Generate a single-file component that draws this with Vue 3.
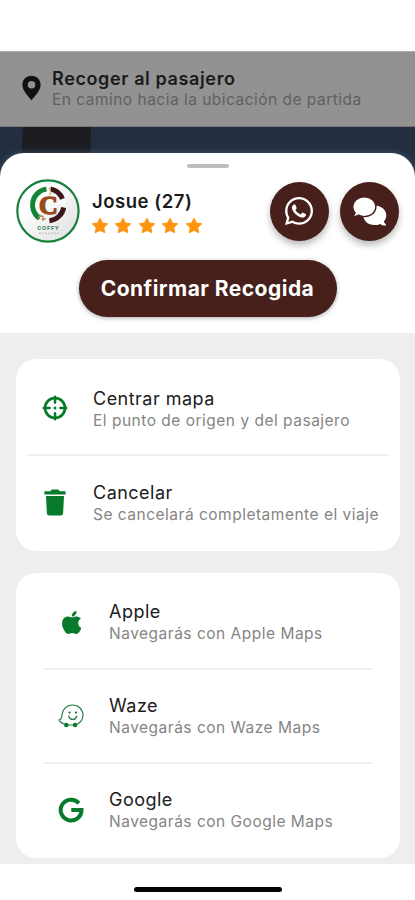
<script setup>
const stars = 5

const mapActions = [
  { icon: 'target', title: 'Centrar mapa', text: 'El punto de origen y del pasajero' },
  { icon: 'trash', title: 'Cancelar', text: 'Se cancelará completamente el viaje' },
]

const navigators = [
  { icon: 'apple', title: 'Apple', text: 'Navegarás con Apple Maps' },
  { icon: 'waze', title: 'Waze', text: 'Navegarás con Waze Maps' },
  { icon: 'google', title: 'Google', text: 'Navegarás con Google Maps' },
]
</script>

<template>
  <div class="screen">
    <header class="pickup">
      <svg class="pin" viewBox="0 0 20 27">
        <path fill-rule="evenodd" d="M10 0.5C4.6 0.5.4 4.7.4 10c0 6.5 6.5 12.300 9.600 16.500C13.100 22.300 19.600 16.500 19.600 10 19.600 4.700 15.400.5 10 .5zm0 5.600a4 4 0 1 1 0 8 4 4 0 0 1 0-8z" />
      </svg>
      <div>
        <div class="pickup-title">Recoger al pasajero</div>
        <div class="pickup-text">En camino hacia la ubicación de partida</div>
      </div>
    </header>

    <div class="map"><div class="road"></div></div>

    <section class="sheet">
      <div class="handle"></div>
      <div class="rider">
        <svg class="avatar" viewBox="0 0 64 64">
          <defs>
            <linearGradient id="disc" x1="0" y1="0" x2="1" y2="1">
              <stop offset=".35" stop-color="#fdfdfd" />
              <stop offset="1" stop-color="#dcdcdf" />
            </linearGradient>
          </defs>
          <circle cx="32" cy="32" r="30.700" fill="url(#disc)" stroke="#17803a" stroke-width="2.200" />
          <g fill="none" stroke-width="5">
            <path stroke="#148536" d="M30.500 10.100A16 16 0 0 0 23.500 39.200" />
            <path stroke="#3d1719" d="M34.500 10A16 16 0 0 1 46.500 19.800" />
            <path stroke="#3d1719" d="M47.800 28.500A16 16 0 0 1 33.500 41.700" />
          </g>
          <path d="M43 23l8-2-3 5 3 4z" fill="#fafafa" />
          <path d="M33.500 9l1.500 4-1.500 3" fill="none" stroke="#d8a562" stroke-width="1.200" />
          <text class="logo-letter" x="32.500" y="35" text-anchor="middle">C</text>
          <path d="M24 40q-3-3 1-3 4 0 1 4M27 42q1-3 3-2" fill="none" stroke="#ad8b55" stroke-width="1.300" />
          <text class="logo-name" x="32.500" y="50.800" text-anchor="middle">COFFY</text>
          <path d="M23 54.200h20" stroke="#cbc9c9" stroke-width="1.500" stroke-dasharray="2 1" />
        </svg>
        <div class="identity">
          <div class="name">Josue (27)</div>
          <div class="stars">
            <svg v-for="n in stars" :key="n" viewBox="0 0 18 18">
              <path d="M9 1.500l2.300 4.600 5.100.7-3.700 3.600.9 5.100L9 13.100l-4.600 2.400.9-5.100-3.700-3.600 5.100-.7z" />
            </svg>
          </div>
        </div>
        <button class="round" aria-label="WhatsApp">
          <svg class="whatsapp" viewBox="0 32 448 448">
            <path d="M380.900 97.100C339 55.100 283.200 32 223.900 32c-122.400 0-222 99.600-222 222 0 39.100 10.200 77.300 29.600 111L0 480l117.700-30.900c32.400 17.700 68.900 27 106.100 27h.1c122.300 0 224.100-99.600 224.100-222 0-59.300-25.200-115-67.100-157zm-157 341.600c-33.200 0-65.700-8.900-94-25.700l-6.700-4-69.800 18.300L72 359.200l-4.400-7c-18.500-29.400-28.200-63.300-28.200-98.200 0-101.700 82.800-184.500 184.600-184.500 49.300 0 95.600 19.200 130.400 54.100 34.800 34.900 56.200 81.200 56.100 130.500 0 101.800-84.900 184.600-186.600 184.600zm101.200-138.200c-5.500-2.800-32.800-16.200-37.900-18-5.100-1.900-8.800-2.800-12.500 2.800-3.700 5.600-14.300 18-17.600 21.800-3.200 3.700-6.500 4.200-12 1.400-32.600-16.300-54-29.100-75.500-66-5.700-9.800 5.700-9.100 16.300-30.300 1.800-3.700.9-6.900-.5-9.700-1.400-2.800-12.500-30.100-17.100-41.200-4.500-10.800-9.100-9.300-12.500-9.500-3.200-.2-6.900-.2-10.600-.2-3.700 0-9.700 1.400-14.800 6.900-5.100 5.600-19.400 19-19.400 46.300 0 27.300 19.900 53.700 22.600 57.400 2.800 3.700 39.100 59.700 94.800 83.800 35.200 15.200 49 16.500 66.600 13.900 10.700-1.600 32.800-13.400 37.400-26.400 4.600-13 4.600-24.100 3.200-26.400-1.300-2.500-5-3.900-10.500-6.600z" />
          </svg>
        </button>
        <button class="round" aria-label="Chat">
          <svg class="chat" viewBox="0 0 35 30">
            <path d="M22.500 9.500c6.600 0 11.800 4.300 11.800 9.800 0 2.400-.9 4.600-2.500 6.300.4 1.100 1.100 2 2.100 2.900.4.400.1 1-.4 1-2 0-3.800-.6-5.400-1.600a14 14 0 0 1-5.600 1.200c-6.500 0-11.300-4.300-11.300-9.800s4.800-9.800 11.300-9.800z" />
            <path class="front" d="M12.300.7C5.700.7.700 5.100.7 10.700c0 2.400.9 4.500 2.400 6.200-.4 1.100-1.200 2.100-2 2.900-.4.400-.1 1 .4 1 2 0 3.800-.7 5.200-1.600 1.700.9 3.600 1.400 5.600 1.400 6.600 0 11.600-4.400 11.600-9.900S18.900.7 12.300.7z" />
          </svg>
        </button>
      </div>
      <button class="confirm">Confirmar Recogida</button>
    </section>

    <main class="options">
      <div v-for="(list, i) in [mapActions, navigators]" :key="i" class="card" :class="{ inset: i === 1 }">
        <div v-for="item in list" :key="item.title" class="row">
          <div class="icon">
            <svg v-if="item.icon === 'target'" class="i-target" viewBox="0 0 26 26">
              <g fill="none" stroke="#087a2b" stroke-linecap="round">
                <circle cx="13" cy="13" r="10" stroke-width="2.700" />
                <path stroke-width="2.600" d="M13 1.800v5.800M13 18.400v5.800M1.800 13h5.800M18.400 13h5.800" />
              </g>
              <circle cx="13" cy="13" r="1.500" />
            </svg>
            <svg v-else-if="item.icon === 'trash'" class="i-trash" viewBox="0 0 22 27">
              <path d="M.4 2.200h5.800L7.800.6h6.400l1.600 1.600h5.800v3.200H.4zM2 7.100h18l-.9 17.200a2.300 2.300 0 0 1-2.300 2.200H5.200a2.300 2.300 0 0 1-2.300-2.200z" />
            </svg>
            <svg v-else-if="item.icon === 'apple'" class="i-apple" viewBox="4 32 367 448">
              <path d="M318.700 268.700c-.2-36.700 16.400-64.400 50-84.800-18.800-26.900-47.200-41.700-84.700-44.600-35.500-2.800-74.300 20.700-88.500 20.700-15 0-49.400-19.700-76.400-19.700C63.300 141.200 4 184.800 4 273.500q0 39.300 14.400 81.200c12.800 36.700 59 126.700 107.200 125.200 25.200-.6 43-17.900 75.800-17.900 31.800 0 48.300 17.900 76.400 17.900 48.600-.7 90.400-82.500 102.600-119.300-65.200-30.700-61.700-90-61.700-91.900zm-56.600-164.200c27.300-32.400 24.800-61.900 24-72.500-24.100 1.400-52 16.400-67.900 34.900-17.500 19.800-27.800 44.300-25.600 71.900 26.100 2 49.900-11.400 69.500-34.300z" />
            </svg>
            <svg v-else-if="item.icon === 'waze'" class="i-waze" viewBox="0 0 26 24">
              <path fill="none" stroke="#2c7d49" stroke-width="1.200" stroke-linejoin="round" d="M6.500 20.200C3.500 19.300 1.600 17.700 1 15.800c2.500-.3 2.800-2 2.900-4.600C4.300 5.300 8.800 1 14.600 1 20.600 1 25 5.600 25 11.100c0 4.300-2.600 7.800-6.500 9.400M9.800 21h5.500" />
              <circle cx="8.300" cy="21" r="2.300" />
              <circle cx="17.100" cy="21" r="2.300" />
              <circle cx="11.500" cy="8.600" r="1.100" />
              <circle cx="18" cy="8.600" r="1.100" />
              <path fill="none" stroke="#2c7d49" stroke-width="1.300" stroke-linecap="round" d="M10.700 12.200c1.300 4.200 6.800 4.200 8.100 0" />
            </svg>
            <svg v-else class="i-google" viewBox="0 0 26 26">
              <path fill="none" stroke="#087a2b" stroke-width="4" d="M20.900 6.200A10.400 10.400 0 1 0 23.500 12.900H13.300" />
            </svg>
          </div>
          <div class="copy">
            <div class="title">{{ item.title }}</div>
            <div class="text">{{ item.text }}</div>
          </div>
        </div>
      </div>
    </main>

    <footer class="home"><div class="bar"></div></footer>
  </div>
</template>

<style>
body {
  background: #fff;
}
</style>

<style scoped>
.screen {
  box-sizing: border-box;
  width: 415px;
  height: 900px;
  padding-top: 51px;
  overflow: hidden;
  background: #fff;
  font-family: Inter, "Liberation Sans", sans-serif;
  display: flex;
  flex-direction: column;
}
svg {
  display: block;
  fill: #087a2b;
}
.pickup {
  box-sizing: border-box;
  height: 76px;
  flex: none;
  padding: 15px 0 0 22px;
  display: flex;
  gap: 11px;
  background: #929292;
  border-top: 1px solid #aaa;
  border-bottom: 1px solid #777;
  white-space: nowrap;
}
.pin {
  width: 19px;
  height: 26px;
  margin-top: 8px;
  fill: #111;
}
.pickup-title {
  padding-top: 1px;
  font-size: 18px;
  font-weight: 600;
  line-height: 22px;
  letter-spacing: 0.620px;
  color: #1a1a1a;
}
.pickup-text {
  font-size: 15.500px;
  line-height: 20px;
  letter-spacing: 0.480px;
  color: #606060;
}
.map {
  height: 60px;
  flex: none;
  padding-left: 20px;
  background: #232f40;
}
.road {
  width: 71px;
  height: 60px;
  background: #1c1c21;
  clip-path: polygon(4% 0, 100% 0, 98% 100%, 0 100%);
}
.sheet {
  position: relative;
  box-sizing: border-box;
  height: 180px;
  flex: none;
  margin-top: -34px;
  padding: 11px 16px 0;
  border-radius: 24px 24px 0 0;
  background: #fff;
  box-shadow: 0 0 6px #45566a;
  clip-path: inset(-10px 0 0 0);
}
.handle {
  width: 42px;
  height: 4px;
  margin: 0 auto;
  border-radius: 2px;
  background: #bdbdbd;
}
.rider {
  display: flex;
  margin-top: 11px;
}
.avatar {
  width: 64px;
  height: 64px;
}
.logo-letter {
  font: 700 26px "Liberation Serif", serif;
  fill: #9a4a1c;
  stroke: #9a4a1c;
  stroke-width: 1.500px;
}
.logo-name {
  font: 700 5.500px Inter, sans-serif;
  letter-spacing: 0.700px;
  fill: #2f7d5c;
}
.identity {
  width: 178px;
  margin-left: 12px;
}
.name {
  padding-top: 10px;
  font-size: 18.500px;
  font-weight: 600;
  line-height: 24px;
  letter-spacing: 0.550px;
  color: #1a1a1a;
}
.stars {
  display: flex;
  gap: 5.500px;
  margin-top: 3.500px;
  margin-left: -1px;
}
.stars svg {
  width: 18px;
  height: 18px;
  fill: #ff9510;
}
.stars path {
  stroke: #ff9510;
  stroke-width: 1.200;
  stroke-linejoin: round;
}
.round {
  width: 59px;
  height: 59px;
  margin: 2.500px 11.500px 0 0;
  padding: 0;
  flex: none;
  display: grid;
  place-items: center;
  border: 0;
  border-radius: 50%;
  background: #471f1b;
  box-shadow: 0 4px 7px rgba(0, 0, 0, 0.28);
}
.round + .round {
  margin-right: 0;
}
.round svg {
  fill: #fff;
}
.whatsapp {
  width: 28px;
  height: 28px;
}
.chat {
  width: 35px;
  height: 30px;
}
.front {
  stroke: #471f1b;
  stroke-width: 1.400;
}
.confirm {
  display: block;
  width: 258px;
  height: 57px;
  margin: 17px auto 0;
  padding: 0;
  border: 0;
  border-radius: 29px;
  background: #471f1b;
  box-shadow: 0 1px 4px rgba(0, 0, 0, 0.35);
  color: #fff;
  font: 700 21px/57px Inter, sans-serif;
  letter-spacing: 0.480px;
}
.options {
  box-sizing: border-box;
  height: 531px;
  flex: none;
  padding: 26px 15px 0 16px;
  background: #eee;
  display: flex;
  flex-direction: column;
  gap: 22px;
}
.card {
  box-sizing: border-box;
  padding: 3px 11px 1px;
  border-radius: 20px;
  background: #fff;
}
.card.inset {
  padding: 3px 27px 0;
}
.row {
  box-sizing: border-box;
  height: 94px;
  display: flex;
  border-bottom: 2px solid #f0f0f0;
}
.row:last-child {
  border-color: transparent;
}
.icon {
  width: 56px;
  height: 92px;
  flex: none;
  display: grid;
  place-items: center;
}
.copy {
  margin-left: 10px;
  padding-top: 25px;
  white-space: nowrap;
}
.inset .copy {
  padding-top: 24px;
}
.title {
  font-size: 18px;
  line-height: 23px;
  letter-spacing: 0.480px;
  color: #202020;
}
.text {
  font-size: 15.500px;
  line-height: 21px;
  letter-spacing: 0.500px;
  color: #858585;
}
.i-target {
  width: 26px;
  height: 26px;
}
.i-trash {
  width: 22px;
  height: 27px;
}
.i-apple {
  width: 19px;
  height: 23px;
}
.i-waze {
  width: 26px;
  height: 24px;
}
.i-google {
  width: 26px;
  height: 26px;
}
.home {
  padding-top: 23px;
}
.bar {
  width: 148px;
  height: 5px;
  margin: 0 auto;
  border-radius: 3px;
  background: #050505;
}
</style>
